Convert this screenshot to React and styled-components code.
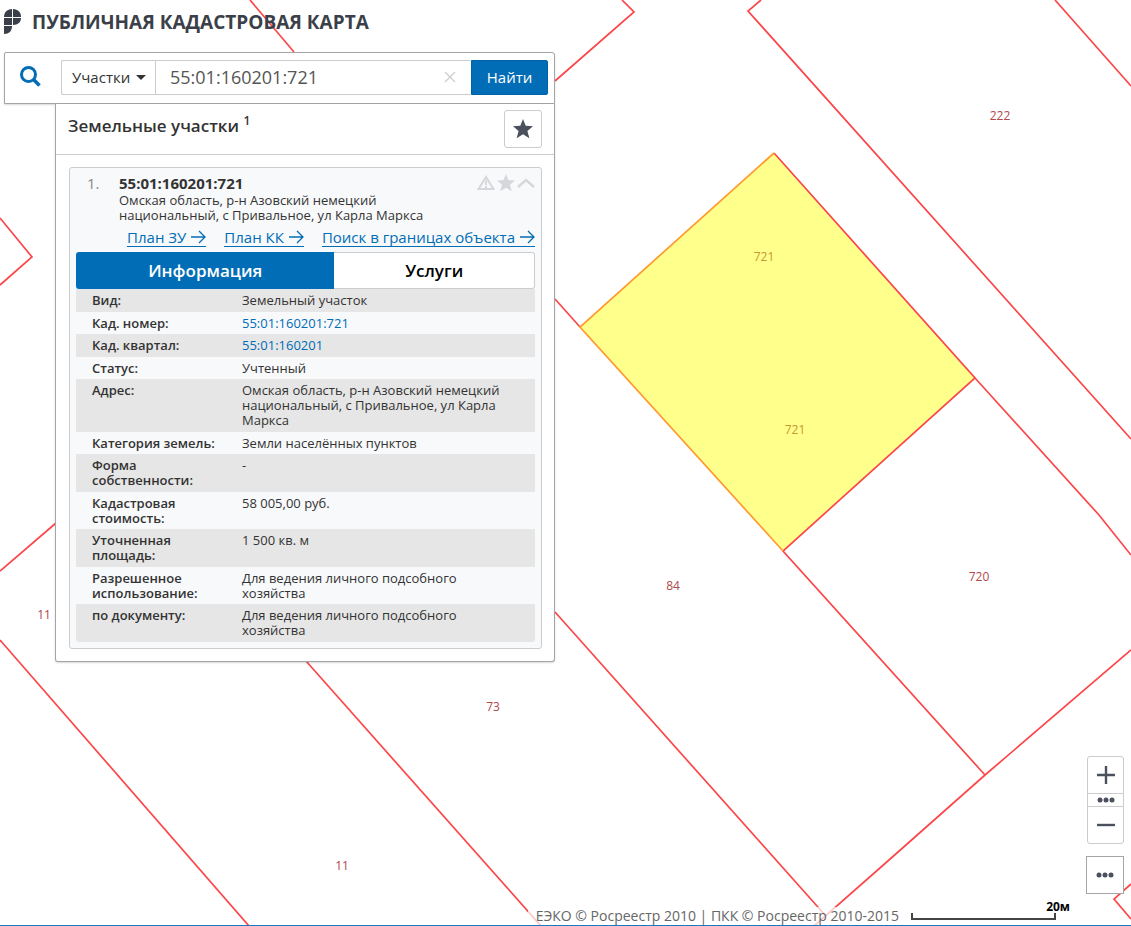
import React from "react";
import styled, { createGlobalStyle, css } from "styled-components";

const GlobalStyle = createGlobalStyle`
  *, *::before, *::after { box-sizing: border-box; }
  body {
    margin: 0;
    background: #fff;
    color: #333;
    font-family: "Open Sans", "Noto Sans", sans-serif;
    font-size: 13px;
    line-height: 15px;
  }
  button, input, select { font: inherit; color: inherit; margin: 0; }
  a { color: #006db6; }
`;

const Page = styled.div`
  position: relative;
  display: flex;
  flex-direction: column;
  min-height: 100vh;
  overflow: hidden;
  border-bottom: 1px solid #1c78b8;
`;

const MapCanvas = styled.svg`
  position: absolute;
  inset: 0;
  width: 100%;
  height: 100%;
`;

const Boundary = styled.path`
  fill: none;
  stroke: ${(p) => (p.$selected ? "#ff9a30" : "#fc464a")};
  stroke-width: 1.7;
`;

const Parcel = styled.path`
  fill: #ffff8b;
`;

const PlotNumber = styled.text`
  fill: ${(p) => (p.$selected ? "#c89632" : "#b0484b")};
  font: 12px "Open Sans", sans-serif;
  text-anchor: middle;
`;

const Header = styled.header`
  position: relative;
  display: flex;
  align-items: center;
  gap: 10px;
  height: 44px;
  padding-left: 4px;
`;

const Title = styled.h1`
  margin: 0;
  color: #3b3f49;
  font-size: 19px;
  line-height: 24px;
  font-weight: 700;
  white-space: nowrap;
`;

const Sidebar = styled.main`
  position: relative;
  width: 551px;
  max-width: calc(100% - 8px);
  margin: 8px 0 0 4px;
`;

const SearchBar = styled.form`
  display: flex;
  align-items: center;
  height: 52px;
  padding: 0 6px 2px 15px;
  background: #fff;
  border: 1px solid #a5a5a5;
  border-radius: 2px 3px 0 0;
  box-shadow: 0 1px 2px rgba(0, 0, 0, 0.15);
`;

const SearchIcon = styled.svg`
  flex: none;
  margin: 0 20px 2px 0;
`;

const SearchGroup = styled.div`
  display: flex;
  flex: 1;
  height: 35px;
  min-width: 0;
  border: 1px solid #ccc;
  border-right: 0;
  border-radius: 2px;
`;

const SelectWrap = styled.label`
  display: flex;
  align-items: center;
  width: 94px;
  padding-right: 9px;
  border-right: 1px solid #ccc;
`;

const Select = styled.select`
  flex: 1;
  min-width: 0;
  height: 100%;
  padding: 0 0 0 10px;
  border: 0;
  background: transparent;
  appearance: none;
  font-size: 15px;
`;

const Query = styled.input`
  flex: 1;
  min-width: 0;
  padding: 0 14px;
  border: 0;
  background: #fff;
  color: #555;
  font-size: 18px;
`;

const ClearButton = styled.button`
  display: flex;
  align-items: center;
  width: 27px;
  padding: 0;
  border: 0;
  background: none;
`;

const FindButton = styled.button`
  width: 77px;
  height: 35px;
  padding: 0;
  border: 1px solid #0061a4;
  border-radius: 0 2px 2px 0;
  background: #006db6;
  color: #fff;
  font-size: 15px;
`;

const Results = styled.section`
  margin-left: 51px;
  background: #fff;
  border: 1px solid #a5a5a5;
  border-top: 0;
  border-radius: 0 0 3px 3px;
  box-shadow: 0 1px 2px rgba(0, 0, 0, 0.15);
`;

const ResultsHeader = styled.div`
  display: flex;
  justify-content: space-between;
  height: 51px;
  padding: 6px 12px 0;
  border-bottom: 1px solid #ccc;
`;

const Heading = styled.h2`
  margin: 0;
  padding-top: 4px;
  font-size: 17px;
  line-height: 24px;
  font-weight: 600;
  sup { font-size: 12px; line-height: 12px; }
`;

const SquareButton = styled.button`
  display: flex;
  align-items: center;
  justify-content: center;
  width: 38px;
  height: 38px;
  padding: 0;
  border: 1px solid ${(p) => (p.$dark ? "#a5a5a5" : "#ccc")};
  border-radius: ${(p) => (p.$dark ? "0" : "3px")};
  background: #fff;
`;

const Card = styled.article`
  margin: 12px 12px 12px 13px;
  padding: 6px;
  border: 1px solid #ccc;
  border-radius: 3px;
  background: #f8f9fb;
`;

const CardTop = styled.div`
  display: grid;
  grid-template-columns: 43px 1fr auto;
  line-height: 15px;
`;

const Index = styled.span`
  padding-left: 11px;
  color: #888;
  font-size: 15px;
  line-height: 19px;
`;

const ParcelId = styled.h3`
  margin: 0;
  font-size: 15px;
  line-height: 19px;
  font-weight: 700;
`;

const Address = styled.p`
  margin: 0;
  max-width: 330px;
`;

const IconRow = styled.div`
  display: flex;
  align-items: flex-start;
`;

const IconButton = styled.button`
  display: flex;
  justify-content: flex-end;
  width: 20px;
  height: 18px;
  padding: 0;
  border: 0;
  background: none;
`;

const Links = styled.nav`
  display: flex;
  justify-content: flex-end;
  gap: 18px;
  margin-top: 4px;
  height: 25px;
`;

const ActionLink = styled.a`
  display: flex;
  align-items: center;
  height: 20px;
  gap: 5px;
  border-bottom: 1px solid #006db6;
  font-size: 15px;
  line-height: 18px;
  text-decoration: none;
  white-space: nowrap;
`;

const Tabs = styled.div`
  display: flex;
  height: 37px;
`;

const Tab = styled.button`
  flex: 200;
  padding: 0;
  border: 1px solid #ccc;
  border-left: 0;
  border-radius: 0 3px 3px 0;
  background: #fff;
  color: #000;
  font-size: 17px;
  font-weight: 600;
  ${(p) =>
    p.$active &&
    css`
      flex: 259;
      border: 0;
      border-radius: 3px 0 0 3px;
      background: #006db6;
      color: #fff;
    `}
`;

const Details = styled.table`
  width: 100%;
  border-spacing: 0;
  border-radius: 0 0 3px 3px;
  overflow: hidden;
  tr:nth-child(odd) { background: #e6e6e6; }
`;

const cell = css`
  padding: 4px 0 3px 16px;
  text-align: left;
  vertical-align: top;
  tr:nth-child(odd) > & { padding-bottom: 4px; }
`;

const Label = styled.th`
  ${cell}
  width: 150px;
  font-weight: 600;
`;

const Value = styled.td`
  ${cell}
  padding-right: 24px;
  a { text-decoration: none; }
`;

const MapTools = styled.div`
  position: absolute;
  right: 7px;
  bottom: 31px;
  display: flex;
  flex-direction: column;
  align-items: flex-end;
  gap: 12px;
`;

const ZoomGroup = styled.div`
  display: flex;
  flex-direction: column;
  width: 37px;
  border: 1px solid #ccc;
  border-radius: 3px;
  background: #fff;
`;

const ZoomButton = styled.button`
  display: flex;
  align-items: center;
  justify-content: center;
  height: ${(p) => p.$height}px;
  padding: 0;
  border: 0;
  background: none;
  & + & { border-top: 1px solid #ccc; }
`;

const Attribution = styled.footer`
  position: absolute;
  right: 61px;
  bottom: 0;
  display: flex;
  align-items: flex-end;
  gap: 12px;
  color: #666;
  font-size: 14px;
  line-height: 18px;
  white-space: nowrap;
`;

const Credit = styled.span`
  padding-left: 8px;
  background: rgba(255, 255, 255, 0.7);
`;

const Scale = styled.div`
  display: flex;
  flex-direction: column;
  align-items: flex-end;
  padding-bottom: 5px;
  color: #000;
  font-size: 12px;
  line-height: 13px;
  font-weight: 700;
`;

const ScaleLine = styled.div`
  width: 145px;
  height: 7px;
  margin-right: 14px;
  border: 2px solid #444;
  border-top: 0;
`;

const boundaries = [
  "M250 0 L294 52",
  "M622 0 L634 12 L555 81",
  "M761 0 L748 11 L1131 439",
  "M1055 0 L1131 86",
  "M555 299 L580 327",
  "M975 378 L1099 515 L1131 555",
  "M774 153 L975 378 L783 551 L985 775",
  "M1131 650 L985 775 L889 860 L814 926",
  "M555 612 L825 915",
  "M0 218 L32 257 L0 285",
  "M0 571 L56 523",
  "M0 640 L249 926",
  "M306 661 L541 926",
  "M1131 884 L1114 899 L1131 919",
];

const plotNumbers = [
  [1000, 120, "222"],
  [673, 590, "84"],
  [979, 581, "720"],
  [493, 711, "73"],
  [44, 619, "11"],
  [342, 870, "11"],
  [764, 261, "721", true],
  [795, 434, "721", true],
];

const place = "Омская область, р-н Азовский немецкий национальный, с Привальное, ул Карла Маркса";

const rows = [
  ["Вид:", "Земельный участок"],
  ["Кад. номер:", <a href="#parcel">55:01:160201:721</a>],
  ["Кад. квартал:", <a href="#quarter">55:01:160201</a>],
  ["Статус:", "Учтенный"],
  ["Адрес:", place],
  ["Категория земель:", "Земли населённых пунктов"],
  ["Форма собственности:", "-"],
  ["Кадастровая стоимость:", "58 005,00 руб."],
  ["Уточненная площадь:", "1 500 кв. м"],
  ["Разрешенное использование:", "Для ведения личного подсобного хозяйства"],
  ["по документу:", "Для ведения личного подсобного хозяйства"],
];

const Star = ({ size, color }) => (
  <svg width={size} height={size} viewBox="0 0 20 20" aria-hidden="true">
    <path fill={color} d="M10 0 L12.7 6.8 L20 7.2 L14.4 11.9 L16.4 19.3 L10 15.2 L3.6 19.3 L5.6 11.9 L0 7.2 L7.3 6.8 Z" />
  </svg>
);

const Arrow = () => (
  <svg width="15" height="14" viewBox="0 0 15 14" aria-hidden="true">
    <path d="M0 7 H14 M8 1 L14 7 L8 13" fill="none" stroke="#006db6" strokeWidth="1.3" />
  </svg>
);

const Dots = () => (
  <svg width="18" height="6" viewBox="0 0 18 6" aria-hidden="true">
    <g fill="#4a505c">
      <circle cx="3" cy="3" r="2.5" />
      <circle cx="9" cy="3" r="2.5" />
      <circle cx="15" cy="3" r="2.5" />
    </g>
  </svg>
);

const Sign = ({ plus }) => (
  <svg width="18" height="18" viewBox="0 0 18 18" aria-hidden="true">
    <path d={plus ? "M0 9 H18 M9 0 V18" : "M0 9 H18"} stroke="#4a505c" strokeWidth="2.4" />
  </svg>
);

export default function App() {
  return (
    <Page>
      <GlobalStyle />
      <MapCanvas role="img" aria-label="Карта участков">
        <Parcel d="M774 153 L975 378 L783 551 L580 327 Z" />
        {boundaries.map((d) => (
          <Boundary key={d} d={d} />
        ))}
        <Boundary $selected d="M774 153 L580 327 L783 551" />
        {plotNumbers.map(([x, y, text, selected]) => (
          <PlotNumber key={`${x}-${y}`} x={x} y={y} $selected={selected}>
            {text}
          </PlotNumber>
        ))}
      </MapCanvas>

      <Header>
        <svg width="18" height="26" viewBox="0 0 18 26" aria-hidden="true">
          <g fill="#3b3f49">
            <path d="M8 0 V8 H0 C0 3 3 0.5 8 0 Z" />
            <path d="M9 0 C14 0.5 17 3 17 8 H9 Z" />
            <path d="M0 9 H8 V16 H0 Z" />
            <path d="M9 9 H17 C17 13 14 16 9 16 Z" />
            <path d="M0 17 H8 C8 22 5 25 0 25 Z" />
          </g>
        </svg>
        <Title>ПУБЛИЧНАЯ КАДАСТРОВАЯ КАРТА</Title>
      </Header>

      <Sidebar>
        <SearchBar onSubmit={(e) => e.preventDefault()}>
          <SearchIcon width="21" height="21" viewBox="0 0 21 21" aria-hidden="true">
            <circle cx="8.5" cy="8.5" r="7" fill="none" stroke="#006db6" strokeWidth="3" />
            <path d="M13.5 13.5 L19.5 19.5" stroke="#006db6" strokeWidth="3.6" />
          </SearchIcon>
          <SearchGroup>
            <SelectWrap>
              <Select aria-label="Тип объекта">
                <option>Участки</option>
              </Select>
              <svg width="10" height="5" viewBox="0 0 10 5" aria-hidden="true">
                <path d="M0 0 H10 L5 5 Z" fill="#333" />
              </svg>
            </SelectWrap>
            <Query aria-label="Поиск" defaultValue="55:01:160201:721" />
            <ClearButton type="button" aria-label="Очистить">
              <svg width="12" height="12" viewBox="0 0 12 12" aria-hidden="true">
                <path d="M1 1 L11 11 M11 1 L1 11" stroke="#ccc" strokeWidth="1.3" />
              </svg>
            </ClearButton>
          </SearchGroup>
          <FindButton type="submit">Найти</FindButton>
        </SearchBar>

        <Results>
          <ResultsHeader>
            <Heading>
              Земельные участки <sup>1</sup>
            </Heading>
            <SquareButton type="button" aria-label="Избранное">
              <Star size={20} color="#4a505c" />
            </SquareButton>
          </ResultsHeader>

          <Card>
            <CardTop>
              <Index>1.</Index>
              <div>
                <ParcelId>55:01:160201:721</ParcelId>
                <Address>{place}</Address>
              </div>
              <IconRow>
                <IconButton type="button" aria-label="Сообщить об ошибке">
                  <svg width="18" height="18" viewBox="0 0 18 18" aria-hidden="true">
                    <path d="M9 3 L16.5 15 H1.5 Z" fill="none" stroke="#d5d7da" strokeWidth="2" />
                    <path d="M9 6.5 V11 M9 12 V14" stroke="#d5d7da" strokeWidth="2" />
                  </svg>
                </IconButton>
                <IconButton type="button" aria-label="В избранное">
                  <Star size={18} color="#d5d7da" />
                </IconButton>
                <IconButton type="button" aria-label="Свернуть">
                  <svg width="18" height="18" viewBox="0 0 18 18" aria-hidden="true">
                    <path d="M1 13 L9 6 L17 13" fill="none" stroke="#d5d7da" strokeWidth="2.4" />
                  </svg>
                </IconButton>
              </IconRow>
            </CardTop>

            <Links>
              <ActionLink href="#plan-zu">План ЗУ <Arrow /></ActionLink>
              <ActionLink href="#plan-kk">План КК <Arrow /></ActionLink>
              <ActionLink href="#search">Поиск в границах объекта <Arrow /></ActionLink>
            </Links>

            <Tabs>
              <Tab type="button" $active>Информация</Tab>
              <Tab type="button">Услуги</Tab>
            </Tabs>

            <Details>
              <tbody>
                {rows.map(([label, value]) => (
                  <tr key={label}>
                    <Label scope="row">{label}</Label>
                    <Value>{value}</Value>
                  </tr>
                ))}
              </tbody>
            </Details>
          </Card>
        </Results>
      </Sidebar>

      <MapTools>
        <ZoomGroup>
          <ZoomButton type="button" $height={36} aria-label="Приблизить"><Sign plus /></ZoomButton>
          <ZoomButton type="button" $height={13} aria-label="Масштаб"><Dots /></ZoomButton>
          <ZoomButton type="button" $height={37} aria-label="Отдалить"><Sign /></ZoomButton>
        </ZoomGroup>
        <SquareButton type="button" $dark aria-label="Инструменты"><Dots /></SquareButton>
      </MapTools>

      <Attribution>
        <Credit>ЕЭКО © Росреестр 2010 | ПКК © Росреестр 2010-2015</Credit>
        <Scale>
          20м
          <ScaleLine />
        </Scale>
      </Attribution>
    </Page>
  );
}
